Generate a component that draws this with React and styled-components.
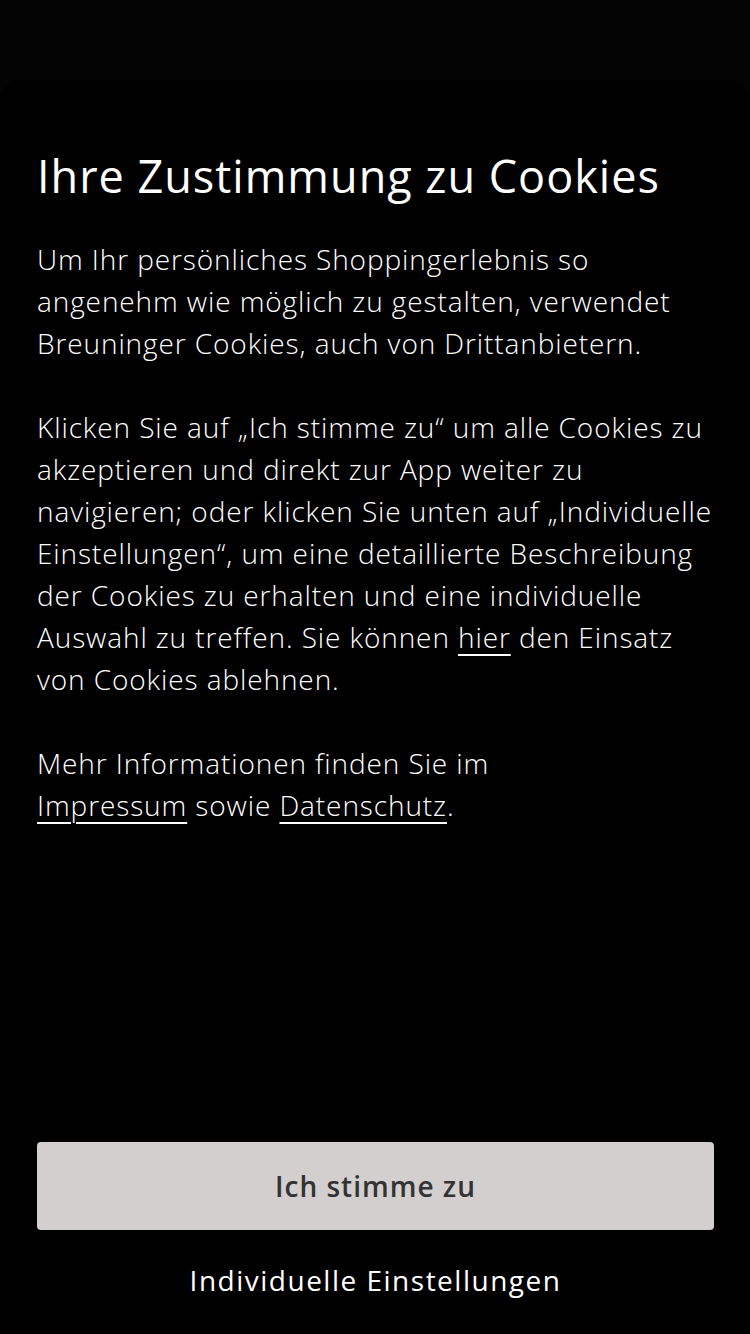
import React from "react";
import styled, { createGlobalStyle } from "styled-components";

const Global = createGlobalStyle`
  html, body { margin: 0; padding: 0; background: #030303; }
  body { font-family: "Open Sans", Lato, sans-serif; -webkit-font-smoothing: antialiased; }
`;

const Screen = styled.div`
  width: 750px;
  height: 1334px;
  background: #030303;
  display: flex;
  flex-direction: column;
  padding-top: 80px;
  box-sizing: border-box;
  overflow: hidden;
`;

const Sheet = styled.div`
  flex: 1;
  background: #000;
  border-radius: 20px 20px 0 0;
  display: flex;
  flex-direction: column;
  padding: 68px 20px 34px 37px;
  color: #fff;
`;

const Title = styled.h1`
  margin: 0 0 34px;
  font-size: 45px;
  font-weight: 500;
  line-height: 56px;
  letter-spacing: 1px;
  white-space: nowrap;
`;

const Body = styled.div`
  flex: 1;
  font-size: 28px;
  font-weight: 300;
  line-height: 42px;
  letter-spacing: 0.9px;
  white-space: nowrap;
`;

const Para = styled.p`
  margin: 0 0 42px;
`;

const Link = styled.a`
  color: #fff;
  text-decoration: underline;
  text-underline-offset: 6px;
  text-decoration-thickness: 2px;
`;

const Actions = styled.div`
  display: flex;
  flex-direction: column;
  gap: 30px;
  padding-right: 16px;
`;

const Primary = styled.button`
  height: 88px;
  border: none;
  border-radius: 4px;
  background: #d3cfcf;
  color: #333;
  font-family: inherit;
  font-size: 28px;
  font-weight: 600;
  letter-spacing: 1px;
`;

const Secondary = styled.button`
  background: none;
  border: none;
  color: #fff;
  font-family: inherit;
  font-size: 28px;
  font-weight: 400;
  letter-spacing: 1.5px;
  padding: 0;
  height: 40px;
`;

export default function App() {
  return (
    <>
      <Global />
      <Screen>
        <Sheet>
          <Title>Ihre Zustimmung zu Cookies</Title>
          <Body>
            <Para>
              Um Ihr persönliches Shoppingerlebnis so<br />
              angenehm wie möglich zu gestalten, verwendet<br />
              Breuninger Cookies, auch von Drittanbietern.
            </Para>
            <Para>
              Klicken Sie auf „Ich stimme zu“ um alle Cookies zu<br />
              akzeptieren und direkt zur App weiter zu<br />
              navigieren; oder klicken Sie unten auf „Individuelle<br />
              Einstellungen“, um eine detaillierte Beschreibung<br />
              der Cookies zu erhalten und eine individuelle<br />
              Auswahl zu treffen. Sie können <Link>hier</Link> den Einsatz<br />
              von Cookies ablehnen.
            </Para>
            <Para>
              Mehr Informationen finden Sie im<br />
              <Link>Impressum</Link> sowie <Link>Datenschutz</Link>.
            </Para>
          </Body>
          <Actions>
            <Primary>Ich stimme zu</Primary>
            <Secondary>Individuelle Einstellungen</Secondary>
          </Actions>
        </Sheet>
      </Screen>
    </>
  );
}
